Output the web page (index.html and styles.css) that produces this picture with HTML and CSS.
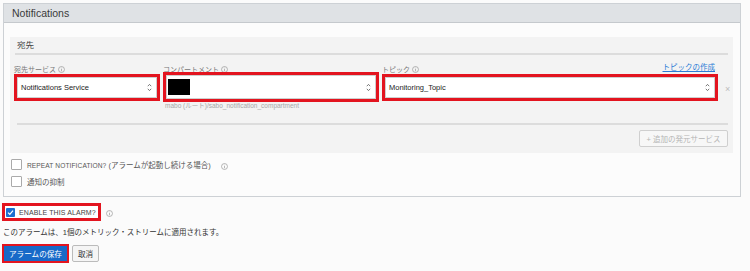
FILE: index.html
```html
<!DOCTYPE html>
<html lang="ja">
<head>
	<meta charset="UTF-8">
	<title>Notifications</title>
	<link rel="stylesheet" href="styles.css">
</head>
<body>
	<div class="panel">
		<div class="panel-head">Notifications</div>
		<div class="panel-body">
			<div class="dest">
				<div class="dest-title">宛先</div>
				<div class="fields">
					<div class="field">
						<div class="label">宛先サービス <svg class="info" viewBox="0 0 8 8"><circle cx="4" cy="4" r="3.4"/><line x1="4" y1="3.4" x2="4" y2="6"/><line x1="4" y1="2" x2="4" y2="2.6"/></svg></div>
						<div class="pick">
							<div class="sel">Notifications Service <svg class="caret" viewBox="0 0 5 9"><polyline points="0.8,3.2 2.5,1.4 4.2,3.2"/><polyline points="0.8,5.8 2.5,7.6 4.2,5.8"/></svg></div>
						</div>
					</div>
					<div class="field">
						<div class="label">コンパートメント <svg class="info" viewBox="0 0 8 8"><circle cx="4" cy="4" r="3.4"/><line x1="4" y1="3.4" x2="4" y2="6"/><line x1="4" y1="2" x2="4" y2="2.6"/></svg></div>
						<div class="pick tall">
							<div class="sel"><span class="masked"></span> <svg class="caret" viewBox="0 0 5 9"><polyline points="0.8,3.2 2.5,1.4 4.2,3.2"/><polyline points="0.8,5.8 2.5,7.6 4.2,5.8"/></svg></div>
						</div>
						<div class="hint">mabo (ルート)/sabo_notification_compartment</div>
					</div>
					<div class="field">
						<div class="label label-row">
							<span>トピック <svg class="info" viewBox="0 0 8 8"><circle cx="4" cy="4" r="3.4"/><line x1="4" y1="3.4" x2="4" y2="6"/><line x1="4" y1="2" x2="4" y2="2.6"/></svg></span>
							<a href="#" class="link">トピックの作成</a>
						</div>
						<div class="pick">
							<div class="sel">Monitoring_Topic <svg class="caret" viewBox="0 0 5 9"><polyline points="0.8,3.2 2.5,1.4 4.2,3.2"/><polyline points="0.8,5.8 2.5,7.6 4.2,5.8"/></svg></div>
						</div>
					</div>
					<div class="remove">×</div>
				</div>
				<div class="sep"></div>
				<div class="add-row">
					<button class="btn-add">+ 追加の発元サービス</button>
				</div>
			</div>
			<div class="check-row">
				<span class="box"></span>
				<span class="check-label"><span class="caps">REPEAT NOTIFICATION?</span> (アラームが起動し続ける場合)</span>
				<svg class="info info-gap" viewBox="0 0 8 8"><circle cx="4" cy="4" r="3.4"/><line x1="4" y1="3.4" x2="4" y2="6"/><line x1="4" y1="2" x2="4" y2="2.6"/></svg>
			</div>
			<div class="check-row">
				<span class="box"></span>
				<span class="check-label">通知の抑制</span>
			</div>
		</div>
	</div>

	<div class="footer">
		<div class="enable-row">
			<div class="enable">
				<svg class="box-on" viewBox="0 0 9 9"><rect width="9" height="9" rx="1"/><polyline points="2,4.6 3.8,6.4 7,2.6"/></svg>
				<span class="caps">ENABLE THIS ALARM?</span>
			</div>
			<svg class="info" viewBox="0 0 8 8"><circle cx="4" cy="4" r="3.4"/><line x1="4" y1="3.4" x2="4" y2="6"/><line x1="4" y1="2" x2="4" y2="2.6"/></svg>
		</div>
		<p class="note">このアラームは、1個のメトリック・ストリームに適用されます。</p>
		<div class="actions">
			<div class="save-wrap"><button class="btn-save">アラームの保存</button></div>
			<button class="btn-cancel">取消</button>
		</div>
	</div>
</body>
</html>
```

FILE: styles.css
```css
body{
	margin:0;
	background:#fbfbfb;
	font-family:"Liberation Sans", Arial, "Noto Sans CJK JP", sans-serif;
	color:#333;
}
.panel{
	margin:3px 9px 0 3px;
	border:1px solid #cdd1d5;
	background:#fcfcfc;
}
.panel-head{
	height:18px;
	line-height:18px;
	padding-left:8px;
	font-size:10.5px;
	background:#dfe2e5;
	border-bottom:1px solid #c5c9cd;
	color:#3a3a3a;
}
.panel-body{
	padding:14px 7px 9px 6px;
}
.dest{
	background:#f3f3f3;
	padding:0 5px 6px 5px;
}
.dest-title{
	height:16px;
	line-height:16px;
	padding-left:2px;
	font-size:8.5px;
	color:#444;
	border-bottom:2px solid #dcdcdc;
}
.fields{
	display:grid;
	grid-template-columns:146px 216px 336px 1fr;
	column-gap:3px;
	margin:11px -1px 0 -1px;
	height:43px;
}
.field{
	display:flex;
	flex-direction:column;
}
.label{
	height:8px;
	line-height:8px;
	font-size:7px;
	color:#777;
	white-space:nowrap;
}
.label-row{
	display:flex;
	justify-content:space-between;
	align-items:flex-end;
	padding-right:3px;
}
.link{
	color:#2b7bd6;
	text-decoration:underline;
	font-size:7.5px;
	position:relative;
	top:-2px;
}
.info{
	width:7px;
	height:7px;
	fill:none;
	stroke:#999;
	stroke-width:0.8;
	vertical-align:-1px;
}
.pick{
	border:3px solid #e3141f;
}
.pick.tall{
	margin-top:-2px;
}
.sel{
	height:19px;
	background:#fff;
	border:1px solid #cfcfcf;
	display:flex;
	align-items:center;
	justify-content:space-between;
	padding:0 4px 0 3px;
	font-size:7.5px;
	color:#222;
}
.pick.tall .sel{
	height:22px;
	padding-left:1px;
}
.masked{
	display:block;
	width:22px;
	height:16px;
	background:#000;
}
.caret{
	width:5px;
	height:9px;
	fill:none;
	stroke:#555;
	stroke-width:0.8;
}
.hint{
	font-size:6.5px;
	color:#a8a8a8;
	margin-top:0;
	padding-left:2px;
	line-height:8px;
}
.remove{
	font-size:9px;
	color:#bbb;
	padding:18px 0 0 4px;
}
.sep{
	margin:14px 0 0 2px;
	border-top:2px solid #dcdcdc;
}
.add-row{
	display:flex;
	justify-content:flex-end;
	margin-top:5px;
}
.btn-add{
	height:17px;
	width:89px;
	padding:0;
	border:1px solid #cfcfcf;
	border-radius:2px;
	background:#f7f7f7;
	color:#b5b5b5;
	font-family:inherit;
	font-size:7.5px;
}
.check-row{
	display:flex;
	align-items:center;
	height:11px;
	margin-top:6px;
	padding-left:1px;
}
.box{
	width:9px;
	height:9px;
	border:1px solid #aaa;
	border-radius:1px;
	background:#fff;
}
.check-label{
	margin-left:5px;
	font-size:7.5px;
	color:#555;
}
.caps{
	font-size:6.6px;
	letter-spacing:0.1px;
}
.info-gap{
	margin:3px 0 0 10px;
}
.footer{
	padding-left:2px;
}
.enable-row{
	display:flex;
	align-items:center;
	margin-top:6px;
}
.enable{
	display:flex;
	align-items:center;
	width:92px;
	height:12px;
	border:3px solid #e3141f;
	background:#fff;
	padding-left:1px;
	color:#444;
}
.enable .caps{
	font-size:7px;
	margin-left:4px;
}
.box-on{
	width:9px;
	height:9px;
}
.box-on rect{
	fill:#1a6fd1;
}
.box-on polyline{
	fill:none;
	stroke:#fff;
	stroke-width:1.2;
}
.enable-row .info{
	margin-left:5px;
	margin-top:3px;
}
.note{
	margin:7px 0 0 1px;
	font-size:7.5px;
	line-height:10px;
	color:#333;
}
.actions{
	display:flex;
	align-items:center;
	gap:3px;
	margin-top:6px;
}
.save-wrap{
	border:2px solid #e3141f;
	display:flex;
}
.btn-save{
	height:15px;
	width:63px;
	padding:0;
	border:none;
	background:#1769c8;
	color:#fff;
	font-family:inherit;
	font-size:7.6px;
}
.btn-cancel{
	height:17px;
	width:27px;
	padding:0;
	border:1px solid #bbb;
	border-radius:2px;
	background:#f5f5f5;
	color:#333;
	font-family:inherit;
	font-size:7.5px;
}
```
